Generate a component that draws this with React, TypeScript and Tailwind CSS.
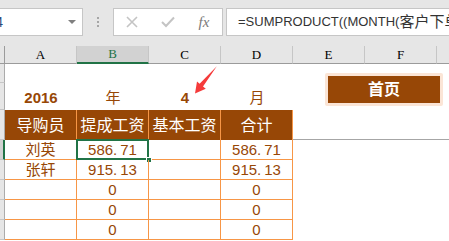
import React from 'react';

const cols = ['A', 'B', 'C', 'D', 'E', 'F'];

const rows = [
    { name: '刘英', bonus: '586.71', base: '', total: '586.71' },
    { name: '张轩', bonus: '915.13', base: '', total: '915.13' },
    { name: '', bonus: '0', base: '', total: '0' },
    { name: '', bonus: '0', base: '', total: '0' },
    { name: '', bonus: '0', base: '', total: '0' },
];

function Num({ value }: { value: string }) {
    // excel shows the decimal point a bit wide in this font
    const [a, b] = value.split('.');
    if (b === undefined) return <span>{value}</span>;
    return (
        <span>
            {a}.<span className="ml-[3px]">{b}</span>
        </span>
    );
}

export default function App() {
    return (
        <div className="relative h-[241px] w-[449px] overflow-hidden bg-white font-['Liberation_Sans','Noto_Sans_CJK_SC',sans-serif]">
            {/* Formula bar */}
            <div className="flex h-[46px] items-start bg-[#e6e6e6] pt-[8px]">
                <div className="flex h-[28px] w-[83px] shrink-0 items-center overflow-hidden border border-l-0 border-[#c6c6c6] bg-white">
                    <span className="-ml-[14px] text-[14px] text-[#2a4a7a]">B4</span>
                    <svg className="ml-auto mr-[6px]" width="8" height="4" viewBox="0 0 8 4">
                        <path d="M0 0 L8 0 L4 4 Z" fill="#7f7f7f" />
                    </svg>
                </div>
                <div className="ml-[14px] flex h-[28px] flex-col items-center justify-center gap-[2px]">
                    <span className="h-[2px] w-[2px] bg-[#a6a6a6]" />
                    <span className="h-[2px] w-[2px] bg-[#a6a6a6]" />
                    <span className="h-[2px] w-[2px] bg-[#a6a6a6]" />
                </div>
                <div className="ml-[14px] flex h-[28px] w-[110px] shrink-0 items-center border border-[#c6c6c6] bg-white">
                    <div className="flex w-[36px] justify-center">
                        <svg width="12" height="12" viewBox="0 0 12 12">
                            <path d="M1 1 L11 11 M11 1 L1 11" stroke="#c4c4c4" strokeWidth="1.6" />
                        </svg>
                    </div>
                    <div className="flex w-[36px] justify-center">
                        <svg width="14" height="12" viewBox="0 0 14 12">
                            <path d="M1 6 L5 10 L13 1.5" stroke="#c4c4c4" strokeWidth="2" fill="none" />
                        </svg>
                    </div>
                    <div className="flex w-[36px] justify-center font-['Liberation_Serif',serif] text-[15px] italic text-[#7a7a7a]">
                        fx
                    </div>
                </div>
                <div className="ml-[3px] flex h-[28px] w-[240px] shrink-0 items-center overflow-hidden whitespace-nowrap border border-r-0 border-[#c6c6c6] bg-white pl-[11px] text-[13px] text-[#333]">
                    =SUMPRODUCT((MONTH(<span className="text-[15px]">客户下单</span>
                </div>
            </div>

            {/* Column headers */}
            <div className="flex h-[18px] bg-[#e6e6e6] font-['Liberation_Serif',serif] text-[13px]">
                <div className="w-[5px] shrink-0 border-b border-r border-[#9b9b9b]" />
                {cols.map((c) => (
                    <div
                        key={c}
                        className={`flex w-[72px] shrink-0 items-center justify-center border-r ${
                            c === 'B'
                                ? 'border-b-2 border-r-[#c6c6c6] border-b-[#217346] bg-[#d2d2d2] text-[#217346]'
                                : 'border-b border-r-[#c6c6c6] border-b-[#9b9b9b] text-black'
                        }`}
                    >
                        {c}
                    </div>
                ))}
                <div className="flex-1 border-b border-[#9b9b9b]" />
            </div>

            {/* Sheet */}
            <div className="flex flex-col text-[#974706]">
                <div className="flex h-[19px]">
                    <div className="w-[5px] shrink-0 border-b border-r border-b-[#c6c6c6] border-r-[#ababab] bg-[#e6e6e6]" />
                </div>
                <div className="flex h-[27px]">
                    <div className="w-[5px] shrink-0 border-b border-r border-b-[#c6c6c6] border-r-[#ababab] bg-[#e6e6e6]" />
                    <div className="flex w-[72px] items-center justify-center pt-[3px] text-[15px] font-bold">2016</div>
                    <div className="flex w-[72px] items-center justify-center pt-[3px] text-[15px]">年</div>
                    <div className="flex w-[72px] items-center justify-center pt-[3px] text-[15px] font-bold">4</div>
                    <div className="flex w-[72px] items-center justify-center pt-[3px] text-[15px]">月</div>
                </div>
                <div className="flex h-[30px]">
                    <div className="w-[5px] shrink-0 border-b border-r border-b-[#c6c6c6] border-r-[#ababab] bg-[#e6e6e6]" />
                    {['导购员', '提成工资', '基本工资', '合计'].map((h) => (
                        <div
                            key={h}
                            className="flex w-[72px] shrink-0 items-center justify-center border-r border-[#f79646] bg-[#974706] pt-[2px] text-[16px] text-white"
                        >
                            {h}
                        </div>
                    ))}
                    <div className="flex-1 border-b border-[#a6a6a6]" />
                </div>
                {rows.map((r, i) => (
                    <div key={i} className="flex h-[20px] text-[15px]">
                        <div
                            className={`w-[5px] shrink-0 border-b border-b-[#c6c6c6] ${
                                i === 0 ? 'border-r-2 border-r-[#217346] bg-[#d2d2d2]' : 'border-r border-r-[#ababab] bg-[#e6e6e6]'
                            }`}
                        />
                        <div className="flex w-[72px] shrink-0 items-center justify-center border-b border-r border-[#f79646] pt-[2px]">
                            {r.name}
                        </div>
                        <div className="relative flex w-[72px] shrink-0 items-center justify-center border-b border-r border-[#f79646] pt-[2px]">
                            <Num value={r.bonus} />
                            {i === 0 && (
                                <>
                                    <div className="absolute -left-[1px] -top-[1px] h-[21px] w-[73px] border-2 border-[#217346]" />
                                    <div className="absolute -bottom-[4px] -right-[4px] h-[6px] w-[6px] border border-white bg-[#217346]" />
                                </>
                            )}
                        </div>
                        <div className="flex w-[72px] shrink-0 items-center justify-center border-b border-r border-[#f79646] pt-[2px]">
                            {r.base}
                        </div>
                        <div className="flex w-[72px] shrink-0 items-center justify-center border-b border-r border-[#f79646] pt-[2px]">
                            <Num value={r.total} />
                        </div>
                    </div>
                ))}
            </div>

            {/* Shape: home button */}
            <div className="absolute left-[325px] top-[73px] h-[33px] w-[118px] rounded-[2px] bg-[#fbe5d6] p-[3px]">
                <div className="flex h-full w-full items-center justify-center bg-[#974706] text-[16px] font-bold text-white">
                    首页
                </div>
            </div>

            {/* Shape: red arrow */}
            <svg className="absolute left-[185px] top-[58px]" width="40" height="42" viewBox="185 58 40 42">
                <polygon
                    points="216.8,66.3 203,86.6 205.8,88.8 195,93.5 197,81.6 199.6,83.8"
                    fill="#f53b3b"
                />
            </svg>
        </div>
    );
}
